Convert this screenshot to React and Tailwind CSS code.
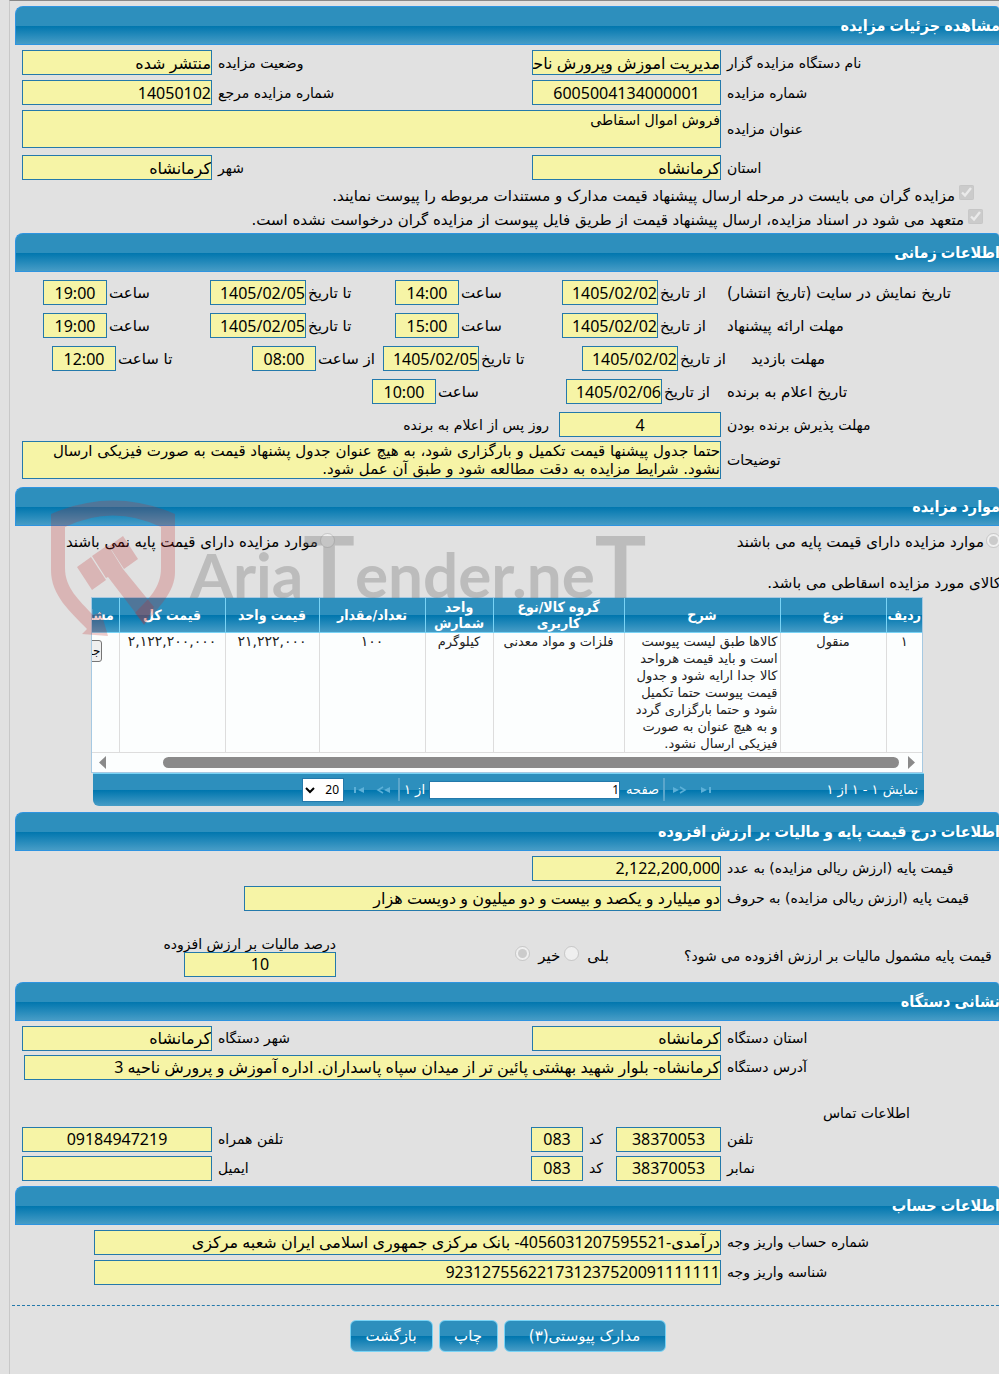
import React from "react";

const barBg = "bg-[linear-gradient(to_bottom,#2d8fbd_0%,#2d8fbd_50%,#0076ae_51%,#469cc6_100%)]";

function SectionTitle({ children }) {
  return (
    <div className={`ml-[5px] h-[39px] border border-r-0 border-[#2e94e0] rounded-tl-lg rounded-tr ${barBg}`}>
      <h2 className="-mr-px font-['Noto_Sans','DejaVu_Sans_Condensed',sans-serif] text-base leading-[37px] font-bold text-white whitespace-nowrap">
        {children}
      </h2>
    </div>
  );
}

// read only yellow box used for every value
function Box({ id, value, className = "" }) {
  return (
    <input
      id={id}
      type="text"
      readOnly
      defaultValue={value}
      className={`h-[25px] min-w-0 shrink-0 border border-[#2479ab] bg-[#f6f4a6] font-['Noto_Sans','DejaVu_Sans',sans-serif] text-base leading-5 text-black outline-none ${className}`}
    />
  );
}

// label that ends right beside its box
function MainLabel({ htmlFor, children }) {
  return (
    <label htmlFor={htmlFor} className="w-[272px] shrink-0 text-left whitespace-nowrap">
      {children}
    </label>
  );
}

function TimeCell({ id, label, value, date }) {
  return (
    <div className="flex items-center gap-0.5">
      <label htmlFor={id} className="flex-1 text-left text-[15px] whitespace-nowrap">{label}</label>
      <Box id={id} value={value} className={date ? "w-24" : "w-16 text-center"} />
    </div>
  );
}

const periods = [
  { id: "show", label: "تاریخ نمایش در سایت (تاریخ انتشار)", fromTime: "14:00" },
  { id: "offer", label: "مهلت ارائه پیشنهاد", fromTime: "15:00" },
];

const columns = [
  { title: "ردیف", width: 36, value: "۱" },
  { title: "نوع", width: 106, value: "منقول" },
  {
    title: "شرح",
    width: 156,
    value: "کالاها طبق لیست پیوست است و باید قیمت هرواحد کالا جدا ارایه شود و جدول قیمت پیوست حتما تکمیل شود و حتما بارگزاری گردد و به هیچ عنوان به صورت فیزیکی ارسال نشود.",
    wrap: true,
  },
  { title: "گروه کالا/نوع کاربری", width: 131, value: "فلزات و مواد معدنی" },
  { title: "واحد شمارش", width: 68, value: "کیلوگرم" },
  { title: "تعداد/مقدار", width: 106, value: "۱۰۰", num: true },
  { title: "قیمت واحد", width: 94, value: "۲۱,۲۲۲,۰۰۰", num: true },
  { title: "قیمت کل", width: 106, value: "۲,۱۲۲,۲۰۰,۰۰۰", num: true },
];

function Watermark() {
  return (
    <div dir="ltr" aria-hidden="true" className="pointer-events-none absolute left-10 top-3 flex items-start">
      <svg width="126" height="138" viewBox="49 499 126 138" fill="#c02a2a" fillOpacity="0.24">
        <path
          fillRule="evenodd"
          d="M50 514Q112 487 174 514V572C174 592 158 607 143 625L134 613C148 598 160 588 160 568V527Q112 504 64 527V568C64 588 78 600 92 615L100 612L107 636L81 634L86 629C70 612 50 596 50 570Z"
        />
        <path d="M76 567L90 557L105 580L91 590ZM91 556L107 545L122 569L153 607L143 624L107 577L105 578ZM108 546L122 536L137 559L123 569Z" />
      </svg>
      <span className="mt-3.5 ml-3.5 font-['Lato',sans-serif] text-[62px] leading-[104px] font-bold text-[#777777]/35">
        Aria<span className="text-[86px]">T</span>ender.ne<span className="text-[86px]">T</span>
      </span>
    </div>
  );
}

function PagerIcon({ flip, end }) {
  return (
    <button type="button" disabled aria-label={end ? "انتها" : "بعدی"} className="flex w-[14px] shrink-0 justify-center">
      <svg width="14" height="10" viewBox="0 0 14 10" fill="#5cb0d8" stroke="#5cb0d8" className={flip ? "-scale-x-100" : ""}>
        {end ? (
          <>
            <path d="M2 2L8 5L2 8Z" stroke="none" />
            <path d="M11 2V8" strokeWidth="2" />
          </>
        ) : (
          <>
            <path d="M0 2L6 5L0 8Z" stroke="none" />
            <path d="M7 2L12 5L7 8" fill="none" strokeWidth="1.5" />
          </>
        )}
      </svg>
    </button>
  );
}

function ItemsTable() {
  return (
    <div className="mr-[75px] ml-[82px]">
      <div className="mr-px -ml-px overflow-hidden border border-[#a6c9e2] bg-[#fcfefe]">
        <table className="w-[910px] table-fixed border-collapse text-[#222]">
          <colgroup>
            {columns.map((c) => (
              <col key={c.title} style={{ width: c.width }} />
            ))}
            <col />
          </colgroup>
          <thead>
            <tr className={`h-[34px] ${barBg}`}>
              {columns.map((c) => (
                <th
                  key={c.title}
                  className="border-l border-b border-[#79d3f5] p-0 font-['DejaVu_Sans_Condensed',sans-serif] text-sm leading-4 font-bold text-white"
                >
                  {c.title.includes("گروه") ? <>گروه کالا/نوع<br />کاربری</> : c.title}
                </th>
              ))}
              <th className="border-b border-[#79d3f5] p-0 font-['DejaVu_Sans_Condensed',sans-serif] text-sm leading-4 font-bold whitespace-nowrap text-white">
                مشاهده جزئیات
              </th>
            </tr>
          </thead>
          <tbody>
            <tr className="h-[119px] border-b border-[#dddddd] align-top">
              {columns.map((c) => (
                <td
                  key={c.title}
                  className={`border-l border-[#dddddd] px-0.5 leading-[17px] ${c.num ? "text-sm" : "text-[13px]"} ${c.wrap ? "text-right" : "text-center whitespace-nowrap"}`}
                >
                  {c.value}
                </td>
              ))}
              <td className="pt-[7px] pr-[17px]">
                <button type="button" className="h-[22px] w-20 rounded-[3px] border border-[#767676] bg-[#efefef] text-right text-xs text-black">
                  جزئیات کالا
                </button>
              </td>
            </tr>
          </tbody>
        </table>
        <div className="flex h-[19px] items-center gap-[9px] px-[7px]">
          <svg width="7" height="13" viewBox="0 0 7 13" fill="#8a8a8a"><path d="M0 0L7 6.500L0 13Z" /></svg>
          <div className="h-[11px] flex-1 rounded-full bg-[#8a8a8a]" />
          <svg width="7" height="13" viewBox="0 0 7 13" fill="#8a8a8a" className="mr-12"><path d="M7 0L0 6.500L7 13Z" /></svg>
        </div>
      </div>

      <div className={`ml-px flex h-[33px] items-center rounded-b-md border-t border-[#79d3f5] pr-1.5 text-[13px] text-white ${barBg}`}>
        <span className="w-[205px] shrink-0">نمایش ۱ - ۱ از ۱</span>
        <PagerIcon end />
        <span className="w-3" />
        <PagerIcon />
        <span className="ml-1 mr-2 h-[23px] w-0.5 bg-[#5ba6cb]" />
        <label htmlFor="page" className="w-[39px] shrink-0">صفحه</label>
        <input id="page" readOnly defaultValue="1" className="h-[18px] min-w-0 flex-1 border border-[#2479ab] bg-white font-['Noto_Sans',sans-serif] text-xs text-black" />
        <span className="w-[29px] shrink-0 pr-1">از ۱</span>
        <span className="ml-2 h-[23px] w-0.5 bg-[#5ba6cb]" />
        <PagerIcon flip />
        <span className="w-2.5" />
        <PagerIcon flip end />
        <select aria-label="تعداد ردیف" className="mr-2 ml-[209px] h-6 w-[42px] shrink-0 border border-[#2479ab] bg-white font-['Noto_Sans',sans-serif] text-xs text-black">
          <option>20</option>
        </select>
      </div>
    </div>
  );
}

function ActionButton({ children, className }) {
  return (
    <button type="button" className={`h-8 rounded-md border border-[#79d3f5] text-[15px] text-white ${barBg} ${className}`}>
      {children}
    </button>
  );
}

export default function App() {
  return (
    <div dir="rtl" lang="fa" className="min-h-screen overflow-hidden bg-[#e1e1e1] pl-[9px] font-['DejaVu_Sans',sans-serif] text-sm leading-5 text-black">
      <main className="relative min-h-screen border-t border-l border-t-[#888] border-l-[#c8c8c8] pt-[5px] pb-5">
        <section>
          <SectionTitle>مشاهده جزئیات مزایده</SectionTitle>
          <div className="flex flex-col gap-[5px] pt-[5px] pl-3">
            <div className="flex items-center gap-1.5">
              <MainLabel htmlFor="org">نام دستگاه مزایده گزار</MainLabel>
              <Box id="org" value="مدیریت اموزش وپرورش ناحیه 3" className="w-[189px]" />
              <label htmlFor="state" className="flex-1 text-left">وضعیت مزایده</label>
              <Box id="state" value="منتشر شده" className="w-[190px]" />
            </div>
            <div className="flex items-center gap-1.5">
              <MainLabel htmlFor="number">شماره مزایده</MainLabel>
              <Box id="number" value="6005004134000001" className="w-[189px] text-center" />
              <label htmlFor="ref" className="flex-1 text-left">شماره مزایده مرجع</label>
              <Box id="ref" value="14050102" className="w-[190px]" />
            </div>
            <div className="flex items-center gap-1.5">
              <MainLabel htmlFor="title">عنوان مزایده</MainLabel>
              <textarea
                id="title"
                readOnly
                defaultValue="فروش اموال اسقاطی"
                className="h-[38px] min-w-0 flex-1 resize-none border border-[#2479ab] bg-[#f6f4a6] text-sm leading-[18px] outline-none"
              />
            </div>
            <div className="flex items-center gap-1.5 pt-0.5">
              <MainLabel htmlFor="province">استان</MainLabel>
              <Box id="province" value="کرمانشاه" className="w-[189px]" />
              <label htmlFor="city" className="flex-1 text-left">شهر</label>
              <Box id="city" value="کرمانشاه" className="w-[190px]" />
            </div>
          </div>
          <div className="pt-1 pr-4 text-[15px]">
            <div className="flex h-6 items-center gap-1 pr-[9px]">
              <input id="docs" type="checkbox" disabled defaultChecked className="mb-2 size-[15px]" />
              <label htmlFor="docs">مزایده گران می بایست در مرحله ارسال پیشنهاد قیمت مدارک و مستندات مربوطه را پیوست نمایند.</label>
            </div>
            <div className="flex h-6 items-center gap-1">
              <input id="commit" type="checkbox" disabled defaultChecked className="mb-2 size-[15px]" />
              <label htmlFor="commit">متعهد می شود در اسناد مزایده، ارسال پیشنهاد قیمت از طریق فایل پیوست از مزایده گران درخواست نشده است.</label>
            </div>
          </div>
        </section>

        <section className="pt-px">
          <SectionTitle>اطلاعات زمانی</SectionTitle>
          <div className="flex flex-col gap-2 pt-2 pl-3">
            {periods.map((p) => (
              <div key={p.id} className="flex items-center">
                <div className="w-[272px] shrink-0 text-left text-[15px]">{p.label}</div>
                <div className="grid flex-1 grid-cols-[165fr_167fr_185fr_167fr] pl-[21px]">
                  <TimeCell id={p.id + "-from"} label="از تاریخ" value="1405/02/02" date />
                  <TimeCell id={p.id + "-from-time"} label="ساعت" value={p.fromTime} />
                  <TimeCell id={p.id + "-to"} label="تا تاریخ" value="1405/02/05" date />
                  <TimeCell id={p.id + "-to-time"} label="ساعت" value="19:00" />
                </div>
              </div>
            ))}
            <div className="flex items-center">
              <div className="w-[248px] shrink-0 text-left text-[15px]">مهلت بازدید</div>
              <div className="grid flex-1 grid-cols-[169fr_199fr_131fr_200fr] pl-[30px]">
                <TimeCell id="visit-from" label="از تاریخ" value="1405/02/02" date />
                <TimeCell id="visit-to" label="تا تاریخ" value="1405/02/05" date />
                <TimeCell id="visit-from-time" label="از ساعت" value="08:00" />
                <TimeCell id="visit-to-time" label="تا ساعت" value="12:00" />
              </div>
            </div>
            <div className="flex items-center">
              <div className="w-[272px] shrink-0 text-left text-[15px]">تاریخ اعلام به برنده</div>
              <div className="grid flex-1 grid-cols-[161fr_194fr_350fr]">
                <TimeCell id="winner" label="از تاریخ" value="1405/02/06" date />
                <TimeCell id="winner-time" label="ساعت" value="10:00" />
              </div>
            </div>
            <div className="flex items-center gap-1.5">
              <MainLabel htmlFor="accept">مهلت پذیرش برنده بودن</MainLabel>
              <Box id="accept" value="4" className="w-[162px] text-center" />
              <span className="pr-1">روز پس از اعلام به برنده</span>
            </div>
          </div>
          <div className="flex items-center gap-1.5 pt-1 pb-2 pl-3">
            <MainLabel htmlFor="notes">توضیحات</MainLabel>
            <textarea
              id="notes"
              readOnly
              defaultValue="حتما جدول پیشنها قیمت تکمیل و بارگزاری شود، به هیچ عنوان جدول پشنهاد قیمت به صورت فیزیکی ارسال نشود. شرایط مزایده به دقت مطالعه شود و طبق آن عمل شود."
              className="h-[38px] min-w-0 flex-1 resize-none overflow-hidden border border-[#2479ab] bg-[#f6f4a6] text-[15px] leading-[18px] outline-none"
            />
          </div>
        </section>

        <section className="relative">
          <SectionTitle>موارد مزایده</SectionTitle>
          <div className="flex h-8 items-center text-[15px]">
            <div className="-mr-0.5 flex w-[666px] items-center gap-0.5">
              <input id="has-base" type="radio" name="base" disabled defaultChecked className="mb-1 size-[15px]" />
              <label htmlFor="has-base">موارد مزایده دارای قیمت پایه می باشند</label>
            </div>
            <div className="flex items-center gap-0.5">
              <input id="no-base" type="radio" name="base" disabled className="mb-1 size-[15px]" />
              <label htmlFor="no-base">موارد مزایده دارای قیمت پایه نمی باشند</label>
            </div>
          </div>
          <p className="-mr-0.5 pt-[15px] pb-1 text-[15px]">کالای مورد مزایده اسقاطی می باشد.</p>
          <ItemsTable />
          <Watermark />
        </section>

        <section className="pt-1.5">
          <SectionTitle>اطلاعات درج قیمت پایه و مالیات بر ارزش افزوده</SectionTitle>
          <div className="flex flex-col gap-[5px] pt-[5px] pl-3">
            <div className="flex items-center gap-1.5">
              <MainLabel htmlFor="price">قیمت پایه (ارزش ریالی مزایده) به عدد</MainLabel>
              <Box id="price" value="2,122,200,000" className="w-[189px]" />
            </div>
            <div className="flex items-center gap-1.5">
              <MainLabel htmlFor="price-text">قیمت پایه (ارزش ریالی مزایده) به حروف</MainLabel>
              <Box id="price-text" value="دو میلیارد و یکصد و بیست و دو میلیون و دویست هزار" className="w-[477px]" />
            </div>
          </div>
          <div className="flex items-start pt-[25px] pb-[5px]">
            <div className="w-[315px] shrink-0 pt-2.5 text-left whitespace-nowrap">قیمت پایه مشمول مالیات بر ارزش افزوده می شود؟</div>
            <div className="mr-[75px] flex w-[273px] items-center gap-1 pt-2.5 text-[15px]">
              <label htmlFor="vat-yes" className="pl-1">بلی</label>
              <input id="vat-yes" type="radio" name="vat" disabled className="mb-1 size-[15px]" />
              <label htmlFor="vat-no" className="pl-1">خیر</label>
              <input id="vat-no" type="radio" name="vat" disabled defaultChecked className="mb-1 size-[15px]" />
            </div>
            <div className="flex flex-col">
              <label htmlFor="vat" className="leading-4">درصد مالیات بر ارزش افزوده</label>
              <Box id="vat" value="10" className="w-[152px] text-center" />
            </div>
          </div>
        </section>

        <section>
          <SectionTitle>نشانی دستگاه</SectionTitle>
          <div className="flex flex-col gap-1 pt-[5px] pl-3">
            <div className="flex items-center gap-1.5">
              <MainLabel htmlFor="org-province">استان دستگاه</MainLabel>
              <Box id="org-province" value="کرمانشاه" className="w-[189px]" />
              <label htmlFor="org-city" className="flex-1 text-left">شهر دستگاه</label>
              <Box id="org-city" value="کرمانشاه" className="w-[190px]" />
            </div>
            <div className="flex items-center gap-1.5 pl-0.5">
              <MainLabel htmlFor="address">آدرس دستگاه</MainLabel>
              <Box id="address" value="کرمانشاه- بلوار شهید بهشتی پائین تر از میدان سپاه پاسداران. اداره آموزش و پرورش ناحیه 3" className="flex-1" />
            </div>
            <h3 className="pt-[19px] pr-[89px]">اطلاعات تماس</h3>
            <div className="flex items-center gap-1.5">
              <MainLabel htmlFor="phone">تلفن</MainLabel>
              <Box id="phone" value="38370053" className="w-[105px] text-center" />
              <label htmlFor="phone-code" className="w-[21px] text-left">کد</label>
              <Box id="phone-code" value="083" className="w-[52px] text-center" />
              <label htmlFor="mobile" className="flex-1 text-left">تلفن همراه</label>
              <Box id="mobile" value="09184947219" className="w-[190px] text-center" />
            </div>
            <div className="flex items-center gap-1.5">
              <MainLabel htmlFor="fax">نمابر</MainLabel>
              <Box id="fax" value="38370053" className="w-[105px] text-center" />
              <label htmlFor="fax-code" className="w-[21px] text-left">کد</label>
              <Box id="fax-code" value="083" className="w-[52px] text-center" />
              <label htmlFor="email" className="flex-1 text-left">ایمیل</label>
              <Box id="email" value="" className="w-[190px]" />
            </div>
          </div>
        </section>

        <section className="pt-[5px]">
          <SectionTitle>اطلاعات حساب</SectionTitle>
          <div className="flex flex-col gap-[5px] pt-[5px] pl-[84px]">
            <div className="flex items-center gap-1.5">
              <MainLabel htmlFor="account">شماره حساب واریز وجه</MainLabel>
              <Box id="account" value="درآمدی-4056031207595521- بانک مرکزی جمهوری اسلامی ایران شعبه مرکزی" className="flex-1" />
            </div>
            <div className="flex items-center gap-1.5">
              <MainLabel htmlFor="deposit">شناسه واریز وجه</MainLabel>
              <Box id="deposit" value="923127556221731237520091111111" className="flex-1" />
            </div>
          </div>
        </section>

        <div className="mt-5 ml-0.5 border-t border-dashed border-[#2479ab]" />
        <div className="flex justify-center gap-1.5 pt-3.5 pl-1.5">
          <ActionButton className="w-[162px]">مدارک پیوستی(۳)</ActionButton>
          <ActionButton className="w-[59px]">چاپ</ActionButton>
          <ActionButton className="w-[83px]">بازگشت</ActionButton>
        </div>
      </main>
    </div>
  );
}
